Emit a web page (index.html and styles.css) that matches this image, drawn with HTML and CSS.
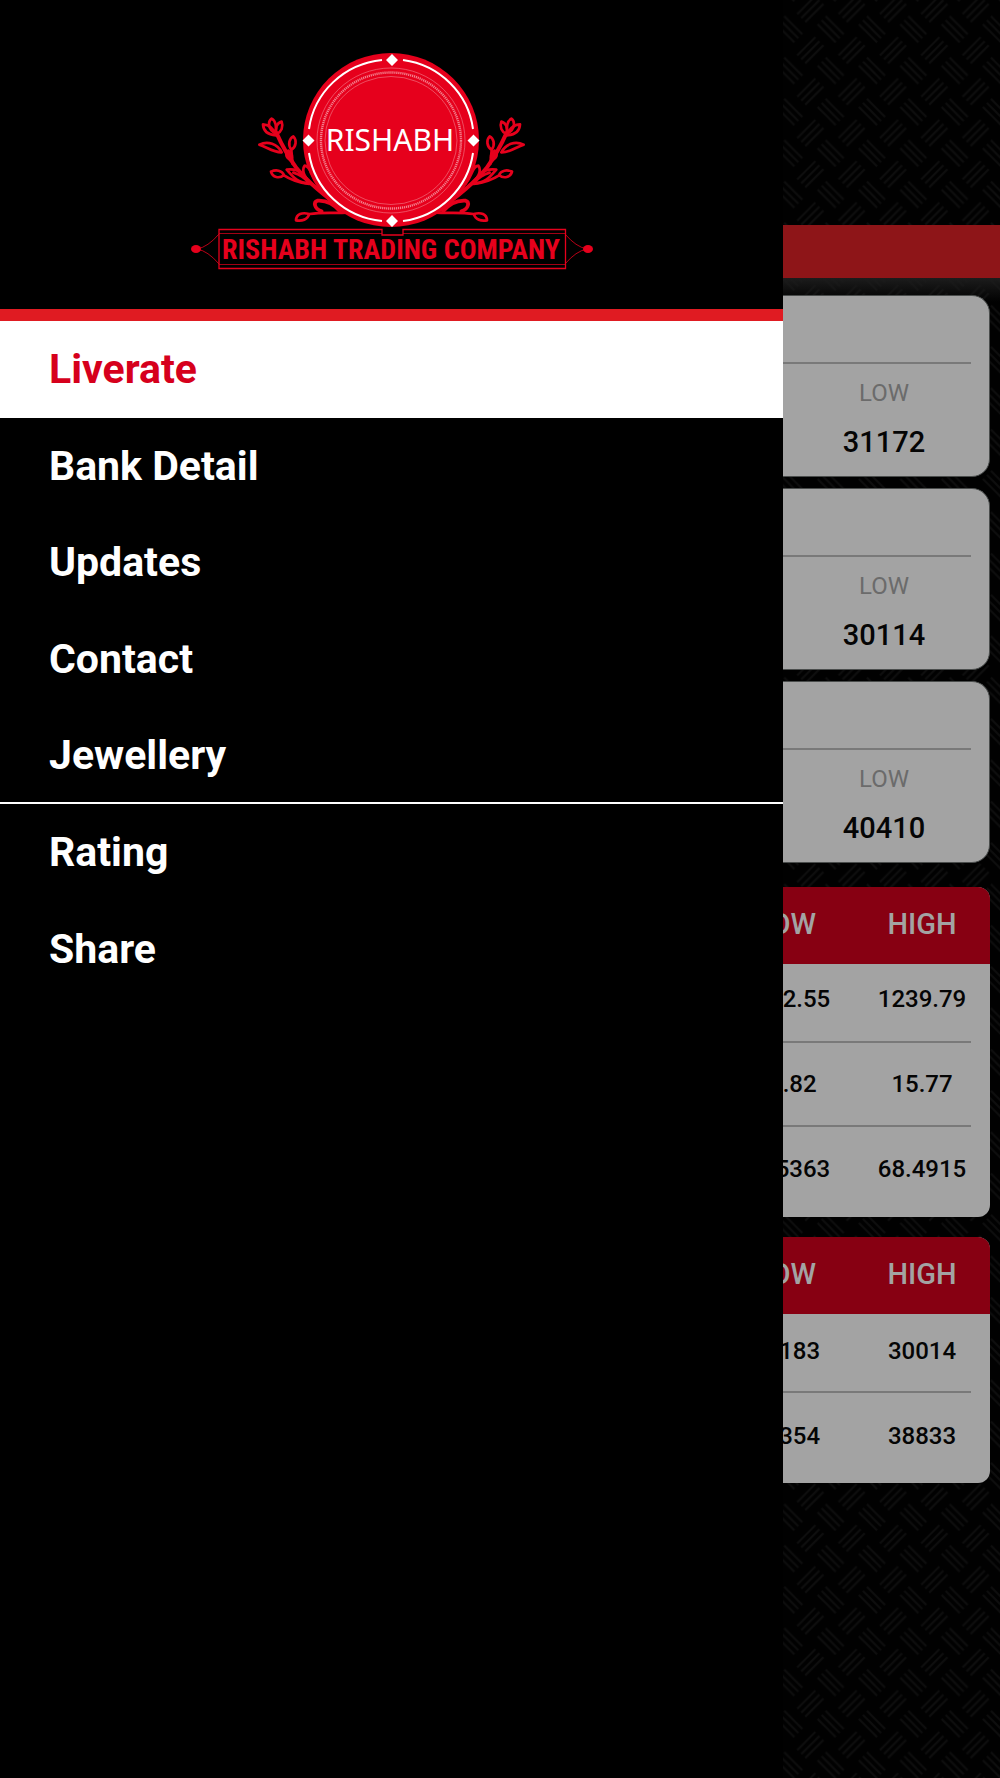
FILE: index.html
```html
<!DOCTYPE html>
<html lang="en">
<head>
<meta charset="utf-8">
<meta name="viewport" content="width=device-width, initial-scale=1">
<title>Rishabh Trading Company</title>
<link rel="stylesheet" href="styles.css">
</head>
<body>
<main class="rates">
  <div class="ticker"></div>
  <div class="cards">
    <section class="card"><dl class="card-low"><dt>LOW</dt><dd>31172</dd></dl></section>
    <section class="card"><dl class="card-low"><dt>LOW</dt><dd>30114</dd></dl></section>
    <section class="card"><dl class="card-low"><dt>LOW</dt><dd>40410</dd></dl></section>
  </div>
  <table class="board">
    <thead><tr><td></td><th class="col">LOW</th><th class="col">HIGH</th></tr></thead>
    <tbody>
      <tr><td></td><td>1232.55</td><td>1239.79</td></tr>
      <tr><td></td><td>14.82</td><td>15.77</td></tr>
      <tr><td></td><td>67.5363</td><td>68.4915</td></tr>
    </tbody>
  </table>
  <table class="board futures">
    <thead><tr><td></td><th class="col">LOW</th><th class="col">HIGH</th></tr></thead>
    <tbody>
      <tr><td></td><td>29183</td><td>30014</td></tr>
      <tr><td></td><td>38354</td><td>38833</td></tr>
    </tbody>
  </table>
</main>

<aside class="drawer">
  <header class="brand">
    <svg class="logo" viewBox="190 48 404 226" role="img" aria-label="Rishabh Trading Company">
      <defs>
        <g id="branch" transform="translate(180 40) scale(.3333)" fill="none" stroke="#e6001c" stroke-width="8" stroke-linecap="round" stroke-linejoin="round">
          <path stroke-width="12" d="M500 515C450 480 395 440 350 385C325 350 310 325 290 280"/>
          <path d="M286 280C262 266 264 244 275 236C287 242 291 262 286 280"/>
          <path d="M288 286C262 284 250 272 249 253C268 254 282 268 288 286"/>
          <path d="M290 282C284 262 292 248 305 245C311 260 304 276 290 282"/>
          <path d="M305 337C280 338 262 322 238 314C264 302 292 312 305 337"/>
          <path d="M334 330C322 312 329 295 340 289C351 300 349 320 334 330L338 372"/>
          <path fill="#e6001c" d="M333 362C313 350 318 337 325 332C338 342 338 352 333 362"/>
          <path d="M273 395C288 388 306 391 312 405C298 417 277 412 273 395M312 406Q340 425 388 432"/>
          <path d="M388 430C350 430 335 405 320 389C350 384 374 400 388 430M340 398Q368 406 384 426"/>
          <path d="M399 436C375 418 363 392 374 377C393 379 390 404 412 431"/>
          <path stroke-width="11" d="M425 514C402 506 400 486 412 482C440 480 460 490 480 514"/>
          <path d="M348 541C349 522 366 516 388 522C383 539 366 544 348 541M389 522C425 516 460 520 500 518"/>
        </g>
        <path id="finial" d="M219 234Q208 247 197 249Q208 251 219 264"/>
      </defs>
      <use href="#branch"/>
      <use href="#branch" transform="translate(783 0) scale(-1 1)"/>
      <ellipse cx="391" cy="140" rx="88" ry="87" fill="#e6001c"/>
      <g fill="none" stroke="#fff">
        <path stroke-width="2" d="M309 129A82 80 0 0 1 382 60M403 60A82 80 0 0 1 473 129M473 153A82 80 0 0 1 403 221M382 221A82 80 0 0 1 309 153"/>
        <g opacity=".5">
          <ellipse cx="391" cy="140.500" rx="74" ry="72.500" stroke-width=".6"/>
          <ellipse cx="391" cy="140.500" rx="70" ry="68" stroke-width="2.400" stroke-dasharray="1.200 .8"/>
          <ellipse cx="391" cy="140.500" rx="66" ry="64" stroke-width=".6"/>
        </g>
      </g>
      <path fill="#fff" d="M392 54l6 6-6 6-6-6zM392 215l6 6-6 6-6-6zM308.500 134.500l6 6-6 6-6-6zM473.500 134.500l6 6-6 6-6-6z"/>
      <text class="logo-name" x="390" y="151" text-anchor="middle">RISHABH</text>
      <g fill="none" stroke="#e6001c">
        <path stroke-width="1.300" d="M219 229.500H382V235H403V229.500H565.500V268.500H219Z"/>
        <path stroke-width=".7" d="M219 233.500H382M403 233.500H565M219 264.500H565"/>
        <use href="#finial" stroke-width=".8"/>
        <use href="#finial" stroke-width=".8" transform="translate(784 0) scale(-1 1)"/>
      </g>
      <ellipse cx="196" cy="249" rx="5" ry="4" fill="#e6001c"/>
      <ellipse cx="588" cy="249" rx="5" ry="4" fill="#e6001c"/>
      <text class="logo-company" x="391" y="259" text-anchor="middle">RISHABH TRADING COMPANY</text>
    </svg>
  </header>
  <nav>
    <ul class="menu">
      <li class="current"><a href="#liverate" aria-current="page">Liverate</a></li>
      <li><a href="#bank">Bank Detail</a></li>
      <li><a href="#updates">Updates</a></li>
      <li><a href="#contact">Contact</a></li>
      <li class="group-end"><a href="#jewellery">Jewellery</a></li>
      <li><a href="#rating">Rating</a></li>
      <li><a href="#share">Share</a></li>
    </ul>
  </nav>
</aside>
</body>
</html>
```
FILE: styles.css
```css
* {
  box-sizing: border-box;
}

body {
  margin: 0;
  position: relative;
  min-height: 100vh;
  font-family: Roboto, "Liberation Sans", sans-serif;
  background: #010101 url("data:image/svg+xml,%3Csvg xmlns='http://www.w3.org/2000/svg' width='124' height='124'%3E%3Cdefs%3E%3Cpattern id='w' x='4' y='29.3' width='41.333' height='41.333' patternUnits='userSpaceOnUse'%3E%3Cg stroke='%230e0e0e' stroke-width='2'%3E%3Cpath d='M12 30L30 12M8 26L26 8M16 34L34 16'/%3E%3Cg id='b'%3E%3Cpath id='a' d='M-9-9L9 9M-5-13L13 5M-13-5L5 13'/%3E%3Cuse href='%23a' x='41.333'/%3E%3C/g%3E%3Cuse href='%23b' y='41.333'/%3E%3C/g%3E%3C/pattern%3E%3C/defs%3E%3Crect width='124' height='124' fill='url(%23w)'/%3E%3C/svg%3E");
}

/* Live rates page, dimmed behind the open drawer */
.rates {
  padding-top: 225px;
}

.ticker {
  height: 53px;
  background: #8e1518;
}

.cards {
  display: grid;
  gap: 11px;
  padding: 17px 10px 24px;
  background: linear-gradient(#1c1c1c, transparent 24px);
}

.card {
  height: 182px;
  padding: 66px 18px 0;
  border: 1px solid #4a4d4c;
  border-radius: 18px;
  background: #a3a3a3;
}

.card-low {
  display: grid;
  justify-items: end;
  margin: 0;
  border-top: 2px solid #797979;
}

.card-low dt,
.card-low dd {
  width: 174px;
  margin: 0;
  text-align: center;
}

.card-low dt {
  padding-top: 15px;
  font-size: 24px;
  line-height: 28px;
  color: #6b6b6b;
}

.card-low dd {
  padding-top: 17px;
  font-size: 29px;
  line-height: 36px;
  font-weight: 500;
  color: #050505;
}

.board {
  width: calc(100% - 20px);
  margin: 0 10px 20px;
  table-layout: fixed;
  border-spacing: 0;
  border-radius: 12px;
  overflow: hidden;
  background: #a3a3a3;
  font-size: 24px;
  font-weight: 500;
  line-height: 28px;
  text-align: center;
  color: #050505;
}

.board th,
.board td {
  padding: 0;
}

.board thead {
  background: #870012;
  color: #a3a3a3;
}

.board th {
  height: 77px;
  padding-bottom: 3px;
  font-size: 29px;
  font-weight: 500;
}

.col {
  width: 136px;
}

.board tbody td {
  height: 84px;
  padding-bottom: 2px;
}

.board tbody tr:first-child td {
  height: 79px;
  padding-bottom: 9px;
}

.board tbody tr:last-child td {
  height: 90px;
  padding-bottom: 7px;
}

.futures tbody tr:first-child td,
.futures tbody tr:last-child td {
  padding-bottom: 5px;
}

.board tbody tr:not(:last-child) {
  background: linear-gradient(#797979, #797979) center bottom / calc(100% - 38px) 2px no-repeat;
}

/* Drawer */
.drawer {
  position: absolute;
  inset: 0 auto 0 0;
  width: 78.3%;
  background: #000;
}

.brand {
  display: flex;
  justify-content: center;
  padding: 48px 24px 35px;
  border-bottom: 12px solid #e01b22;
}

.logo {
  display: block;
  width: 404px;
  max-width: 100%;
}

.logo-name {
  font: 30px "Noto Sans", "Open Sans", sans-serif;
  fill: #fff;
}

.logo-company {
  font: bold 28px "Liberation Sans Narrow", "Roboto Condensed", sans-serif;
  fill: #e6001c;
}

.menu {
  display: grid;
  grid-auto-rows: 1fr;
  min-height: 676px;
  margin: 0;
  padding: 0;
  list-style: none;
}

.menu li {
  display: flex;
}

.menu a {
  display: flex;
  flex: 1;
  align-items: center;
  padding-left: 49px;
  font-size: 41px;
  line-height: 48px;
  font-weight: 700;
  color: #fff;
  text-decoration: none;
}

.menu .current {
  background: #fff;
}

.menu .current a {
  color: #d6001c;
}

.menu .group-end {
  border-bottom: 2px solid #fff;
}
```
